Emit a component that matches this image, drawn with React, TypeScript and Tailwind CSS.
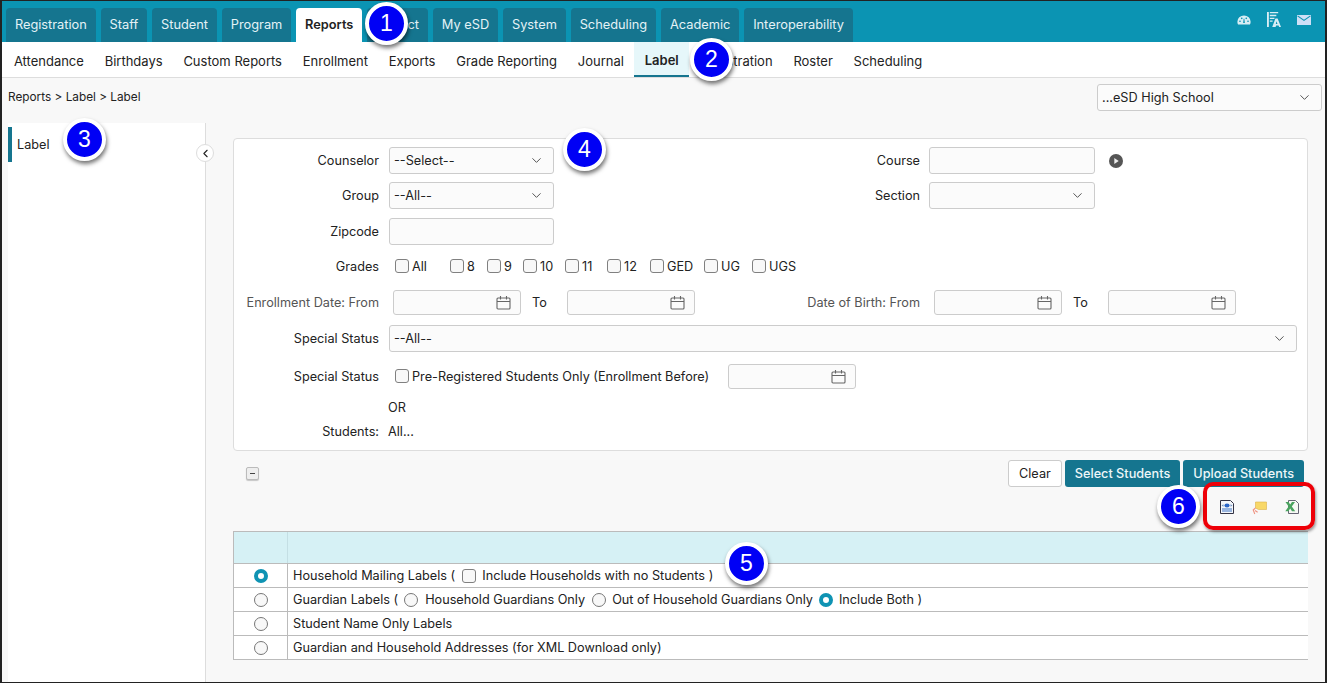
import { ChevronDown, ChevronLeft } from "lucide-react"
import type { ReactNode } from "react"

const mainTabs = ["Registration", "Staff", "Student", "Program", "Reports", "District", "My eSD", "System", "Scheduling", "Academic", "Interoperability"]
const subTabs = ["Attendance", "Birthdays", "Custom Reports", "Enrollment", "Exports", "Grade Reporting", "Journal", "Label", "Registration", "Roster", "Scheduling"]
const grades = [
  { name: "All", cls: "w-[55px]" },
  { name: "8", cls: "w-[37px]" },
  { name: "9", cls: "w-[36px]" },
  { name: "10", cls: "w-[42px]" },
  { name: "11", cls: "w-[42px]" },
  { name: "12", cls: "w-[43px]" },
  { name: "GED", cls: "w-[54px]" },
  { name: "UG", cls: "w-[48px]" },
  { name: "UGS", cls: "" },
]

function FieldLabel({ children, light }: { children: ReactNode; light?: boolean }) {
  return <div className={`w-[145px] shrink-0 text-right whitespace-nowrap ${light ? "text-[#555]" : ""}`}>{children}</div>
}

function TextBox({ className = "" }: { className?: string }) {
  return <div className={`h-[27px] bg-[#fbfbfb] border border-[#ccc] rounded-[3px] ${className}`} />
}

function SelectBox({ value, className = "" }: { value?: string; className?: string }) {
  return (
    <div className={`h-[27px] flex items-center justify-between pl-[4px] pr-[9px] bg-[#fbfbfb] border border-[#ccc] rounded-[3px] ${className}`}>
      <span>{value}</span>
      <ChevronDown className="w-[15px] h-[15px] text-[#555]" strokeWidth={1.6} />
    </div>
  )
}

function DateBox({ className = "" }: { className?: string }) {
  return (
    <div className={`w-[128px] h-[25px] flex items-center justify-end pr-[9px] bg-[#fbfbfb] border border-[#ccc] rounded-[3px] ${className}`}>
      <svg width="15" height="15" viewBox="0 0 15 15" fill="none" stroke="#666" strokeWidth="1.1">
        <rect x="1" y="3" width="13" height="11" rx="1" />
        <path d="M1 6.5h13M4.5 1v3.5M10.5 1v3.5" />
      </svg>
    </div>
  )
}

function Check({ className = "" }: { className?: string }) {
  return <span className={`inline-block w-[14px] h-[14px] shrink-0 bg-[#f8f8f8] border border-[#808080] rounded-[3px] ${className}`} />
}

function Radio({ on }: { on?: boolean }) {
  if (on) {
    return <span className="inline-block w-[14px] h-[14px] shrink-0 rounded-full bg-white border-[4px] border-[#0f93b3]" />
  }
  return <span className="inline-block w-[14px] h-[14px] shrink-0 rounded-full bg-[#f8f8f8] border border-[#777]" />
}

function Badge({ n, className }: { n: number; className: string }) {
  return (
    <div className={`absolute w-[43px] h-[43px] rounded-full bg-[#0000f5] border-[4px] border-white shadow-[1px_3px_4px_rgba(0,0,0,0.55)] flex items-center justify-center text-white text-[23px] leading-none font-['Liberation_Sans',sans-serif] ${className}`}>
      {n}
    </div>
  )
}

function LabelRow({ on, children, className = "h-[24px]" }: { on?: boolean; children: ReactNode; className?: string }) {
  return (
    <div className={`flex border-b border-[#bbb] bg-white ${className}`}>
      <div className="w-[54px] shrink-0 flex items-center justify-center border-r border-[#bbb]">
        <Radio on={on} />
      </div>
      <div className="flex items-center pl-[5px] whitespace-nowrap">{children}</div>
    </div>
  )
}

export default function App() {
  return (
    <div className="relative w-[1327px] h-[683px] overflow-hidden box-border border-y border-x-2 border-[#222] bg-[#f8f8f8] text-[12.7px] text-[#222] font-['Inter',sans-serif]">
      {/* top tabs */}
      <div className="h-[41px] flex items-end justify-between pl-[4px] pr-[14px] bg-[#0b94b3]">
        <div className="flex gap-[5px] text-[12.8px]">
          {mainTabs.map((t) => (
            <div
              key={t}
              className={`h-[34px] px-[8.9px] flex items-center rounded-t-[4px] ${
                t === "Reports" ? "bg-white text-[#222] font-semibold" : "bg-[#15758f] text-[#e4f2f6]"
              }`}
            >
              {t}
            </div>
          ))}
        </div>
        <div className="flex items-center gap-[16px] pb-[15px]">
          <svg width="14" height="10" viewBox="0 0 16 12" preserveAspectRatio="none">
            <path fill="#d8edf4" d="M8 .5A7.6 7.6 0 0 0 .4 8.2c0 1.2.3 2.2.8 3.1h13.6c.5-.9.8-1.9.8-3.1A7.6 7.6 0 0 0 8 .5z" />
            <g fill="#0b94b3">
              <circle cx="3.4" cy="7.5" r="1" />
              <circle cx="5.4" cy="4" r="1" />
              <circle cx="10.6" cy="4" r="1" />
              <circle cx="12.6" cy="7.5" r="1" />
              <path d="M7 9.5l.6-5h.8l.6 5z" />
            </g>
          </svg>
          <svg width="14" height="15" viewBox="0 0 15 16" fill="#d8edf4">
            <path d="M0 0h2v16H0zM3 0h9v1.4H3zM3 3h7v1.4H3zM3 6h5v1.4H3zM3 9h3v1.4H3z" />
            <path d="M9 7h2.4L15 16h-2l-.6-1.7H9.8L9.2 16H5.6zm1.2 3l-.8 2.8h1.8z" />
          </svg>
          <svg width="14" height="10" viewBox="0 0 13 10" preserveAspectRatio="none">
            <rect width="13" height="10" fill="#cfdff6" />
            <path d="M.5.8l6 4.6 6-4.6" fill="none" stroke="#0b94b3" strokeWidth="1" />
          </svg>
        </div>
      </div>

      {/* sub nav */}
      <div className="h-[36px] flex pl-[1.5px] bg-white border-b border-[#ddd] text-[13px]">
        {subTabs.map((t) => (
          <div
            key={t}
            className={`h-[35px] px-[10.4px] pt-[4px] flex items-center ${
              t === "Label" ? "bg-[#e6f7fa] font-semibold border-b-2 border-[#15758f]" : ""
            }`}
          >
            {t}
          </div>
        ))}
      </div>

      {/* breadcrumb */}
      <div className="h-[45px] flex justify-between items-start pl-[6px] pr-[3px]">
        <div className="mt-[11px] text-[11.8px] leading-[16px]">Reports &gt; Label &gt; Label</div>
        <SelectBox value="...eSD High School" className="w-[225px] mt-[6px] pl-[3px]" />
      </div>

      <div className="flex h-[560px]">
        {/* sidebar */}
        <div className="relative ml-[6px] w-[198px] shrink-0 bg-white border-r border-[#ddd] pt-[4px]">
          <div className="h-[35px] flex items-center pl-[5px] border-l-4 border-[#15758f]">Label</div>
          <div className="absolute top-[21px] -right-[9px] w-[18px] h-[18px] rounded-full bg-white border border-[#ddd] flex items-center justify-center">
            <ChevronLeft className="w-[13px] h-[13px] text-[#222]" strokeWidth={2} />
          </div>
        </div>

        {/* content */}
        <div className="flex-1 pl-[27px] pr-[17px] pt-[15px]">
          <div className="h-[313px] pt-[8px] bg-white border border-[#ddd] rounded-[4px]">
            <div className="h-[27px] flex items-center">
              <FieldLabel>Counselor</FieldLabel>
              <SelectBox value="--Select--" className="ml-[10px] w-[165px]" />
              <div className="ml-[266px] w-[100px] text-right">Course</div>
              <TextBox className="ml-[9px] w-[166px]" />
              <svg className="ml-[14px]" width="14" height="14" viewBox="0 0 14 14">
                <circle cx="7" cy="7" r="7" fill="#555" />
                <path d="M5.3 4l4.4 3-4.4 3z" fill="#eee" />
              </svg>
            </div>
            <div className="mt-[8px] h-[27px] flex items-center">
              <FieldLabel>Group</FieldLabel>
              <SelectBox value="--All--" className="ml-[10px] w-[165px]" />
              <div className="ml-[266px] w-[100px] text-right">Section</div>
              <SelectBox className="ml-[9px] w-[166px]" />
            </div>
            <div className="mt-[9px] h-[27px] flex items-center">
              <FieldLabel>Zipcode</FieldLabel>
              <TextBox className="ml-[10px] w-[165px]" />
            </div>
            <div className="mt-[8px] h-[27px] flex items-center">
              <FieldLabel>Grades</FieldLabel>
              <div className="ml-[16px] flex items-center">
                {grades.map((g) => (
                  <label key={g.name} className={`flex items-center gap-[3px] ${g.cls}`}>
                    <Check />
                    {g.name}
                  </label>
                ))}
              </div>
            </div>
            <div className="mt-[9px] h-[27px] flex items-center">
              <FieldLabel light>Enrollment Date: From</FieldLabel>
              <DateBox className="ml-[14px]" />
              <div className="ml-[11px] w-[35px]">To</div>
              <DateBox />
              <div className="ml-[25px] w-[200px] text-right text-[#555]">Date of Birth: From</div>
              <DateBox className="ml-[14px]" />
              <div className="ml-[11px] w-[35px]">To</div>
              <DateBox />
            </div>
            <div className="mt-[9px] h-[27px] flex items-center">
              <FieldLabel>Special Status</FieldLabel>
              <SelectBox value="--All--" className="ml-[10px] w-[908px]" />
            </div>
            <div className="mt-[11px] h-[27px] flex items-center">
              <FieldLabel>Special Status</FieldLabel>
              <label className="ml-[16px] w-[333px] flex items-center gap-[3px]">
                <Check />
                Pre-Registered Students Only (Enrollment Before)
              </label>
              <DateBox />
            </div>
            <div className="mt-[10px] h-[16px] leading-[16px] pl-[154px]">OR</div>
            <div className="mt-[8px] h-[16px] flex items-center">
              <FieldLabel>Students:</FieldLabel>
              <span className="ml-[9px]">All...</span>
            </div>
          </div>

          <div className="mt-[9px] h-[27px] flex items-center justify-between pr-[4px]">
            <div className="ml-[13px] w-[13px] h-[13px] flex items-center justify-center bg-[#eee] border border-[#bbb] rounded-[2px] shadow-[0_1px_1px_rgba(0,0,0,0.2)]">
              <span className="w-[5px] h-[1.5px] bg-[#444]" />
            </div>
            <div className="flex gap-[3px]">
              <div className="h-[27px] px-[10px] flex items-center bg-white border border-[#ccc] rounded-[3px]">Clear</div>
              <div className="h-[27px] px-[10px] flex items-center bg-[#15758f] text-[#eef7f9] font-medium rounded-[3px]">Select Students</div>
              <div className="h-[27px] px-[10px] flex items-center bg-[#15758f] text-[#eef7f9] font-medium rounded-[3px]">Upload Students</div>
            </div>
          </div>

          <div className="mt-[10px] h-[20px] flex justify-end items-center gap-[18px] pr-[9px]">
            <svg width="14" height="14" viewBox="0 0 14 14">
              <path d="M.5.5h10l3 3v10H.5z" fill="#f4f7fb" stroke="#334" strokeWidth="1" />
              <ellipse cx="7" cy="5.5" rx="2.6" ry="2" fill="#2b66c8" />
              <path d="M1.5 5.5l2-1.2v2.4zM12.5 5.5l-2-1.2v2.4z" fill="#6d8fbf" />
              <path d="M2 9h10M2 11h10" stroke="#3f74c4" strokeWidth="1.2" />
            </svg>
            <svg width="15" height="15" viewBox="0 0 15 15">
              <path d="M3.5 2h11v7.5H6.5L3.5 8z" fill="#f8d868" stroke="#dcb24a" strokeWidth="0.6" />
              <path d="M3.5 8L1.2 10l1.6 4M3 10.5l2.6 1.8" fill="none" stroke="#ef9280" strokeWidth="1.1" />
            </svg>
            <svg width="14" height="14" viewBox="0 0 14 14">
              <path d="M3.5.5h7l3 3v10h-10z" fill="#f6f8f4" stroke="#556" strokeWidth="0.9" />
              <path d="M.5 2h3L5.2 4.4 7 2h3L6.8 6.5l3.4 4.7H7L5.2 8.6 3.4 11.200H.3l3.3-4.700z" fill="#4aa35f" />
            </svg>
          </div>

          {/* label options */}
          <div className="mt-[14px] border-l border-t border-[#bbb]">
            <div className="h-[32px] flex bg-[#d6f1f5] border-b border-[#bbb]">
              <div className="w-[54px] border-r border-[#c4dfe4]" />
            </div>
            <LabelRow on>
              Household Mailing Labels (
              <Check className="ml-[7px] mr-[6px]" />
              Include Households with no Students )
            </LabelRow>
            <LabelRow>
              Guardian Labels (
              <span className="ml-[6px] mr-[7px] flex"><Radio /></span>
              Household Guardians Only
              <span className="ml-[7px] mr-[6px] flex"><Radio /></span>
              Out of Household Guardians Only
              <span className="ml-[6px] mr-[6px] flex"><Radio on /></span>
              Include Both )
            </LabelRow>
            <LabelRow>Student Name Only Labels</LabelRow>
            <LabelRow>Guardian and Household Addresses (for XML Download only)</LabelRow>
          </div>
        </div>
      </div>

      {/* callouts */}
      <div className="absolute left-[1201px] top-[481px] w-[112px] h-[48px] border-[4px] border-[#ee0008] rounded-[10px] shadow-[1px_2px_3px_rgba(0,0,0,0.4)]" />
      <Badge n={1} className="left-[363px] top-[1px]" />
      <Badge n={2} className="left-[688px] top-[37px]" />
      <Badge n={3} className="left-[61px] top-[117px]" />
      <Badge n={4} className="left-[561px] top-[127px]" />
      <Badge n={5} className="left-[723px] top-[541px]" />
      <Badge n={6} className="left-[1155px] top-[484px]" />
    </div>
  )
}
